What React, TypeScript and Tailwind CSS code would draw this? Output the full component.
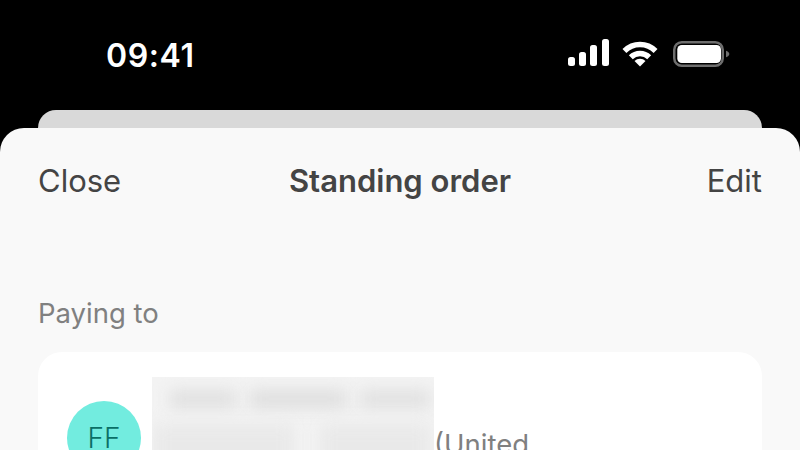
export default function App() {
  return (
    <div className="w-[800px] h-[450px] overflow-hidden bg-black flex flex-col" style={{ fontFamily: "Inter, 'Noto Sans', sans-serif" }}>
      <div className="h-[110px] shrink-0 flex items-start justify-between pt-[37px] pl-[106px] pr-[70px]">
        <span className="text-[32px] leading-[38px] font-semibold text-white tracking-[0.6px]">09:41</span>
        <svg width="162" height="30" viewBox="0 0 162 30" className="mt-[2px]">
          <g fill="#fff">
            <rect x="0" y="18" width="7" height="9" rx="2.500" />
            <rect x="11" y="13" width="7" height="14" rx="2.500" />
            <rect x="22" y="6" width="7" height="21" rx="2.500" />
            <rect x="34" y="0" width="7" height="27" rx="2.500" />
            <path d="M72 27.500 L66.500 22 A7.800 7.800 0 0 1 77.500 22 Z" />
          </g>
          <g fill="none" stroke="#fff" strokeWidth="5.500">
            <path d="M56.440 11.940 A22 22 0 0 1 87.560 11.940" />
            <path d="M62.810 18.310 A13 13 0 0 1 81.190 18.310" />
          </g>
          <rect x="106.250" y="3.250" width="48.500" height="23.500" rx="7.500" fill="none" stroke="#6e6e6e" strokeWidth="2.500" />
          <rect x="109.300" y="6" width="43.700" height="18" rx="4.500" fill="#fff" />
          <path d="M158 11.700c1.800.6 3.300 1.800 3.300 3.300s-1.500 2.700-3.300 3.300z" fill="#6f6f6f" />
        </svg>
      </div>
      <div className="h-[18px] shrink-0 mx-[38px] bg-[#d9d9d9] rounded-t-[20px]" />
      <div className="flex-1 bg-[#f9f9f9] rounded-t-[24px] px-[38px] flex flex-col">
        <div className="h-[106px] shrink-0 grid grid-cols-[1fr_auto_1fr] items-center text-[#444444]">
          <span className="text-[31px] leading-[36px]">Close</span>
          <span className="text-[31px] leading-[36px] font-semibold">Standing order</span>
          <span className="text-[31px] leading-[36px] text-right">Edit</span>
        </div>
        <div className="mt-[62px] h-[36px] shrink-0 flex items-center text-[27.500px] text-[#808080]">Paying to</div>
        <div className="mt-[20px] h-[200px] shrink-0 bg-white rounded-t-[24px] pl-[29px] pt-[25px] flex items-start">
          <div className="mt-[24px] w-[74px] h-[74px] shrink-0 rounded-full bg-[#72ecdf] flex items-center justify-center text-[28px] font-light text-[#0a6f66]">FF</div>
          <div className="ml-[11px] w-[282px] h-[120px] shrink-0 bg-[#f3f3f3] overflow-hidden pt-[14px]">
            <div className="flex pl-[18px] gap-[14px]">
              <div className="h-[16px] w-[66px] bg-[#dedede] blur-[8px]" />
              <div className="h-[16px] w-[96px] bg-[#dcdcdc] blur-[8px]" />
              <div className="h-[16px] w-[70px] bg-[#dfdfdf] blur-[8px]" />
            </div>
            <div className="flex pl-[2px] gap-[26px] mt-[17px]">
              <div className="h-[44px] w-[140px] bg-[#e9e9e9] blur-[8px]" />
              <div className="h-[44px] w-[110px] bg-[#e9e9e9] blur-[8px]" />
            </div>
          </div>
          <span className="mt-[51px] text-[27.500px] leading-[32px] text-[#808080] whitespace-nowrap">(United</span>
        </div>
      </div>
    </div>
  );
}
